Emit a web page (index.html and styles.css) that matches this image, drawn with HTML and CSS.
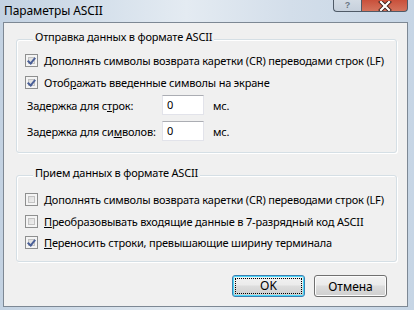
FILE: index.html
```html
<!DOCTYPE html>
<html lang="ru">
<head>
    <meta charset="UTF-8">
    <title>Параметры ASCII</title>
    <link rel="stylesheet" href="styles.css">
</head>
<body>

<div class="window">
    <div class="titlebar">
        <span class="title">Параметры ASCII</span>
        <div class="caption-buttons">
            <span class="cap-btn help"><span class="help-mark">?</span></span>
            <span class="cap-btn close">
                <svg width="14" height="10" viewBox="0 0 14 10">
                    <path d="M3 1 L11 9 M11 1 L3 9" stroke="#3b1e1a" stroke-width="4" stroke-linecap="square"/>
                    <path d="M3 1 L11 9 M11 1 L3 9" stroke="#fff" stroke-width="2.2" stroke-linecap="square"/>
                </svg>
            </span>
        </div>
    </div>

    <div class="client">
        <div class="group send">
            <div class="group-title">Отправка данных в формате ASCII</div>
            <label class="check"><span class="box checked"></span><span><u>Д</u>ополнять символы возврата каретки (CR) переводами строк (LF)</span></label>
            <label class="check"><span class="box checked"></span><span>Отоб<u>р</u>ажать введенные символы на экране</span></label>
            <div class="delays">
                <div class="delay">
                    <span class="delay-label">Задержка для с<u>т</u>рок:</span>
                    <span class="textbox">0</span>
                    <span>мс.</span>
                </div>
                <div class="delay">
                    <span class="delay-label">Задержка для си<u>м</u>волов:</span>
                    <span class="textbox">0</span>
                    <span>мс.</span>
                </div>
            </div>
        </div>

        <div class="group receive">
            <div class="group-title">Прием данных в формате ASCII</div>
            <label class="check"><span class="box"></span><span><u>Д</u>ополнять символы возврата каретки (CR) переводами строк (LF)</span></label>
            <label class="check"><span class="box"></span><span><u>П</u>реобразовывать входящие данные в 7-разрядный код ASCII</span></label>
            <label class="check"><span class="box checked"></span><span><u>П</u>ереносить строки, превышающие ширину терминала</span></label>
        </div>

        <div class="actions">
            <button class="btn default"><span class="focus">OK</span></button>
            <button class="btn">Отмена</button>
        </div>
    </div>
</div>

</body>
</html>
```

FILE: styles.css
```css
body {
    margin: 0;
    overflow: hidden;
    font-family: "Noto Sans", "Liberation Sans", sans-serif;
    font-size: 11px;
    letter-spacing: -0.19px;
    color: #000;
}
.window {
    width: 414px;
    height: 310px;
    display: flex;
    flex-direction: column;
    background: linear-gradient(to right, #c3d2e2 0%, #d9e3ed 30%, #e4ebf2 45%, #d3deea 70%, #c6d5e5 100%);
    overflow: hidden;
}
.titlebar {
    height: 22px;
    display: flex;
    justify-content: space-between;
    align-items: flex-start;
}
.title {
    font-size: 12px;
    line-height: 21px;
    padding-left: 4px;
    letter-spacing: -0.1px;
}
.caption-buttons {
    display: flex;
    margin-right: 6px;
}
.cap-btn {
    height: 12px;
    display: flex;
    align-items: center;
    justify-content: center;
    border: 1px solid #4f5a67;
    border-top: none;
    box-sizing: border-box;
}
.help {
    width: 28px;
    border-radius: 0 0 0 4px;
    border-right: none;
    background: linear-gradient(#d3dbe4, #c6d0dc);
}
.help-mark {
    color: #6a7684;
    font-family: "Liberation Sans", sans-serif;
    font-size: 9px;
    font-weight: bold;
    line-height: 11px;
}
.close {
    width: 47px;
    border-radius: 0 0 4px 0;
    background: linear-gradient(#c9503b, #d4735c);
}
.client {
    flex: 1;
    margin: 0 6px 3px 3px;
    border: 1px solid #7d8894;
    background: #f0f0f0;
    padding: 16px 10px 0 12px;
}
.group {
    border: 1px solid #d5dfe5;
    border-radius: 3px;
    box-shadow: 1px 1px 0 #fff, inset 1px 1px 0 #fff;
    padding: 0 0 0 8px;
}
.group-title {
    width: fit-content;
    margin: -10px 0 11px 8px;
    padding: 0 2px;
    line-height: 13px;
    background: #f0f0f0;
}
.send {
    padding-bottom: 11px;
}
.receive {
    margin-top: 22px;
    padding-bottom: 12px;
}
.receive .group-title {
    margin-bottom: 14px;
}
.check {
    display: flex;
    align-items: center;
    gap: 6px;
    height: 13px;
    margin-bottom: 9px;
    white-space: nowrap;
}
.receive .check {
    margin-bottom: 8.5px;
}
.receive .check:last-child {
    margin-bottom: 0;
}
.box {
    width: 13px;
    height: 13px;
    box-sizing: border-box;
    border: 1px solid #8e8f8f;
    background: linear-gradient(135deg, #d5d5d5, #f7f7f7);
    box-shadow: inset 0 0 0 2px #f4f4f4, inset 0 0 0 3px #c3c3c3;
    position: relative;
    flex: none;
}
.box.checked::after {
    content: "";
    position: absolute;
    left: 3px;
    top: 1px;
    width: 3px;
    height: 6px;
    border: solid #4a5f97;
    border-width: 0 2px 2px 0;
    transform: rotate(40deg);
}
.delays {
    margin-top: -3px;
    display: flex;
    flex-direction: column;
    gap: 6px;
}
.delay {
    display: flex;
    align-items: center;
    height: 20px;
    margin-left: 2px;
}
.delay-label {
    width: 135px;
}
.textbox {
    width: 42px;
    height: 20px;
    box-sizing: border-box;
    border: 1px solid #e2e3ea;
    border-top-color: #abadb3;
    background: #fff;
    padding-left: 4px;
    line-height: 18px;
    margin-right: 9px;
}
.actions {
    display: flex;
    justify-content: flex-end;
    gap: 9px;
    margin-top: 13px;
    margin-right: 10px;
}
.btn {
    width: 73px;
    height: 22px;
    border: 1px solid #707070;
    border-radius: 3px;
    background: linear-gradient(#f2f2f2 0%, #ebebeb 45%, #dddddd 50%, #cfcfcf 100%);
    font-family: "Noto Sans", "Liberation Sans", sans-serif;
    font-size: 12px;
    padding: 0;
    box-shadow: inset 0 0 0 1px #fcfcfc;
}
.btn.default {
    border-color: #3c7fb1;
    box-shadow: inset 0 0 0 1px #48d8fb;
    padding: 2px;
}
.focus {
    display: block;
    height: 100%;
    box-sizing: border-box;
    border: 1px dotted #000;
    line-height: 14px;
}
```
